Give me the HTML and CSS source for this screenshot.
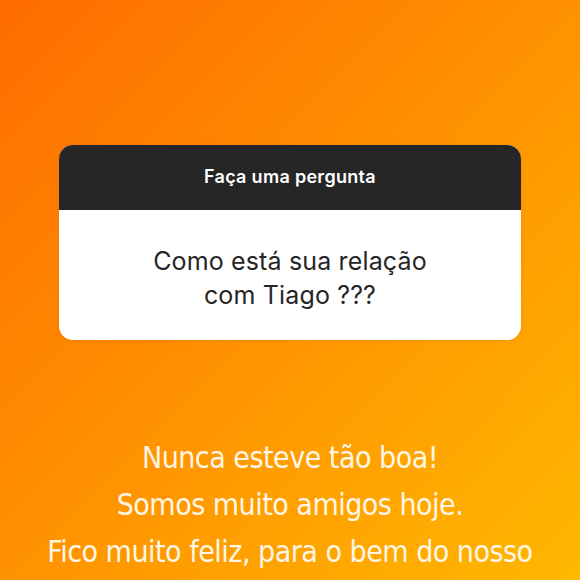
FILE: index.html
```html
<!DOCTYPE html>
<html lang="pt">
<head>
    <meta charset="UTF-8">
    <meta name="viewport" content="width=device-width, initial-scale=1.0">
    <title>Pergunta</title>
    <link rel="stylesheet" href="styles.css">
</head>
<body>
    <div class="story">
        <div class="card">
            <div class="card-head">Faça uma pergunta</div>
            <div class="card-body">Como está sua relação<br>com Tiago ???</div>
        </div>
        <div class="answer">
            <p>Nunca esteve tão boa!</p>
            <p>Somos muito amigos hoje.</p>
            <p>Fico muito feliz, para o bem do nosso</p>
        </div>
    </div>
</body>
</html>
```

FILE: styles.css
```css
*{
    padding: 0;
    margin: 0;
    box-sizing: border-box;
}
body{
    width: 580px;
    height: 580px;
    overflow: hidden;
    background-image: linear-gradient(135deg, #ff6c00 0%, #ff9200 50%, #ffb800 100%);
}
.story{
    display: flex;
    flex-direction: column;
    align-items: center;
    padding-top: 145px;
}
.card{
    width: 462px;
    border-radius: 14px;
    overflow: hidden;
    background: #fff;
    box-shadow: 0 1px 4px rgba(150, 70, 0, 0.15);
}
.card-head{
    height: 65px;
    background: #262626;
    color: #fff;
    display: flex;
    align-items: center;
    justify-content: center;
    font-family: "Inter", "Liberation Sans", sans-serif;
    font-weight: 600;
    font-size: 18px;
    letter-spacing: 0.3px;
    padding-bottom: 2px;
}
.card-body{
    height: 130px;
    display: flex;
    align-items: center;
    justify-content: center;
    text-align: center;
    color: #262626;
    font-family: "Inter", "Liberation Sans", sans-serif;
    font-size: 25px;
    letter-spacing: 0.15px;
    line-height: 34px;
    padding-top: 6px;
}
.answer{
    margin-top: 94px;
    text-align: center;
    color: #fff6e6;
    font-family: "DejaVu Sans Condensed", "DejaVu Sans", sans-serif;
    font-stretch: condensed;
    font-size: 30px;
    letter-spacing: -0.5px;
    line-height: 47px;
}
```
